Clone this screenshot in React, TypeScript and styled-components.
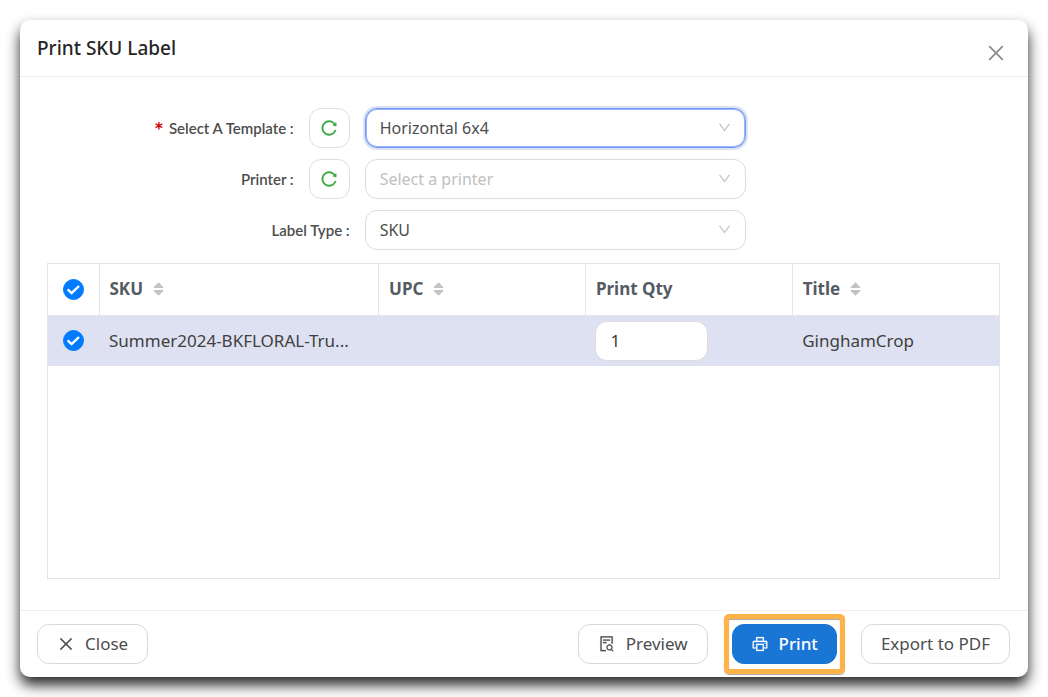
import React from "react";
import styled, { createGlobalStyle, css } from "styled-components";
import {
  AiOutlineClose,
  AiOutlineDown,
  AiOutlineFileSearch,
  AiOutlinePrinter,
  AiOutlineReload,
} from "react-icons/ai";

const uiFont = `"Noto Sans", "Open Sans", sans-serif`;
const labelFont = `Lato, "Noto Sans", sans-serif`;

const GlobalStyle = createGlobalStyle`
  *, *::before, *::after { box-sizing: border-box; }
  body {
    margin: 0;
    background: #fff;
    color: #474747;
    font-family: ${uiFont};
    font-size: 16px;
    line-height: 24px;
  }
  button, input, select { font: inherit; color: inherit; margin: 0; }
`;

const Page = styled.main`
  padding: 20px;
`;

const Dialog = styled.section`
  display: flex;
  flex-direction: column;
  background: #fff;
  border-radius: 10px;
  box-shadow: 0 8px 14px rgba(0, 0, 0, 0.85);
`;

const Header = styled.header`
  display: flex;
  align-items: center;
  justify-content: space-between;
  height: 57px;
  padding: 0 17px;
  border-bottom: 1px solid #ececec;
`;

const Title = styled.h1`
  margin: 0;
  font-size: 19px;
  font-weight: 500;
  line-height: 24px;
  color: #262626;
`;

const IconButton = styled.button`
  display: flex;
  padding: 4px;
  margin-top: 9px;
  border: 0;
  background: none;
  color: #8c8c8c;
  font-size: 22px;
  cursor: pointer;
`;

const Body = styled.div`
  display: flex;
  flex-direction: column;
  gap: 13px;
  padding: 31px 28px 31px 27px;
`;

const Form = styled.form`
  display: flex;
  flex-direction: column;
  gap: 11px;
`;

const Row = styled.div`
  display: grid;
  grid-template-columns: 5fr 6fr 4fr;
  align-items: center;
`;

const LabelCell = styled.div`
  display: flex;
  align-items: center;
  justify-content: flex-end;
  gap: 15px;
  padding-right: 15px;
`;

const Label = styled.label`
  font-family: ${labelFont};
  font-size: 15px;
  font-weight: 600;
  white-space: nowrap;
  color: #4d4d4d;
`;

const Required = styled.span`
  margin-right: 6px;
  font-family: "DejaVu Sans", sans-serif;
  font-weight: 700;
  color: #c00;
`;

const ReloadButton = styled.button`
  display: flex;
  align-items: center;
  justify-content: center;
  width: 41px;
  height: 40px;
  padding: 0;
  border: 1px solid #dedede;
  border-radius: 12px;
  background: #fff;
  color: #3aa63f;
  font-size: 18px;
  cursor: pointer;

  svg {
    stroke: currentColor;
    stroke-width: 28px;
  }
`;

const SelectBox = styled.div`
  position: relative;
  color: #c4c4c4;

  svg {
    position: absolute;
    top: 12px;
    right: 14px;
    font-size: 15px;
    pointer-events: none;
  }
`;

const Select = styled.select<{ $active?: boolean; $empty?: boolean }>`
  display: block;
  width: 100%;
  height: 40px;
  padding: 0 40px 0 14px;
  appearance: none;
  outline: none;
  border: 1px solid #dcdcdc;
  border-radius: 12px;
  background: #fff;
  color: ${(p) => (p.$empty ? "#c0c0c0" : "#4d4d4d")};
  ${(p) =>
    p.$active &&
    css`
      border-color: #7596f0;
      box-shadow: inset 0 0 0 1px #9db5f6, 0 0 0 2px #dbe3fb;
    `}
`;

const TableFrame = styled.div`
  min-height: 316px;
  border: 1px solid #e4e4e4;
`;

const Table = styled.table`
  width: 100%;
  table-layout: fixed;
  border-collapse: collapse;
  font-size: 17px;
`;

const HeadCell = styled.th`
  height: 51px;
  padding: 0 10px;
  border-bottom: 1px solid #e6e6e6;
  text-align: left;
  font-weight: 700;
  color: #545b63;

  & + & {
    border-left: 1px solid #e6e6e6;
  }
`;

const HeadContent = styled.span`
  display: flex;
  align-items: center;
  gap: 10px;
`;

const BodyRow = styled.tr`
  background: #dee1f1;
`;

const Cell = styled.td`
  height: 51px;
  padding: 0 10px;
  white-space: nowrap;
  color: #404040;
`;

const CheckBox = styled.span`
  display: grid;
  width: 21px;
  height: 21px;
  margin: 0 auto;

  input,
  svg {
    grid-area: 1 / 1;
    width: 21px;
    height: 21px;
  }

  input {
    appearance: none;
    border: 1px solid #c4c4c4;
    border-radius: 50%;
    background: #fff;
  }

  input:checked {
    border-color: #007bff;
    background: #007bff;
  }

  svg {
    pointer-events: none;
  }
`;

const QtyInput = styled.input`
  display: block;
  width: 113px;
  height: 40px;
  padding: 0 14px;
  border: 1px solid #dcdcdc;
  border-radius: 12px;
  background: #fff;
`;

const Footer = styled.footer`
  display: flex;
  align-items: center;
  justify-content: space-between;
  padding: 3px 18px 3px 17px;
  border-top: 1px solid #efefef;
`;

const Actions = styled.div`
  display: flex;
  align-items: center;
  gap: 16px;
`;

const Button = styled.button<{ $primary?: boolean }>`
  display: flex;
  align-items: center;
  gap: 10px;
  height: 40px;
  padding: 0 ${(p) => (p.$primary ? 18 : 19)}px;
  border: 1px solid ${(p) => (p.$primary ? "#1976d5" : "#d9d9d9")};
  border-radius: 12px;
  background: ${(p) => (p.$primary ? "#1976d5" : "#fff")};
  color: ${(p) => (p.$primary ? "#fff" : "#4d4d4d")};
  font-size: 17px;
  font-weight: ${(p) => (p.$primary ? 500 : 400)};
  white-space: nowrap;
  cursor: pointer;

  svg {
    font-size: 18px;
    stroke: currentColor;
    stroke-width: 12px;
  }
`;

const Highlight = styled.div`
  padding: 5px 3px;
  border: 5px solid #ffb347;
  border-radius: 5px;
  box-shadow: 0 1px 1px rgba(80, 80, 80, 0.5), inset 0 1px 1px rgba(80, 80, 80, 0.5);
`;

function SortIcon() {
  return (
    <svg width="11" height="14" viewBox="0 0 11 14" fill="#c3c3c3" aria-hidden="true">
      <path d="M5.5 0.3 10 4.7Q10.8 6 9.8 6H1.2Q0.2 6 1 4.7Z" />
      <path d="M5.5 13.7 10 9.3Q10.8 8 9.8 8H1.2Q0.2 8 1 9.3Z" />
    </svg>
  );
}

function RoundCheck({ label }: { label: string }) {
  return (
    <CheckBox>
      <input type="checkbox" defaultChecked aria-label={label} />
      <svg viewBox="0 0 21 21" fill="none" stroke="#fff" strokeWidth="2.4" aria-hidden="true">
        <path d="M4.6 10.4 8.6 14.2 16 7" />
      </svg>
    </CheckBox>
  );
}

interface FieldProps {
  id: string;
  label: string;
  value: string;
  required?: boolean;
  reload?: boolean;
  active?: boolean;
  empty?: boolean;
}

function Field({ id, label, value, required, reload, active, empty }: FieldProps) {
  return (
    <Row>
      <LabelCell>
        <Label htmlFor={id}>
          {required && <Required>*</Required>}
          {label} :
        </Label>
        {reload && (
          <ReloadButton type="button" aria-label={`Reload ${label}`}>
            <AiOutlineReload />
          </ReloadButton>
        )}
      </LabelCell>
      <SelectBox>
        <Select id={id} $active={active} $empty={empty}>
          <option>{value}</option>
        </Select>
        <AiOutlineDown />
      </SelectBox>
    </Row>
  );
}

const columns = [
  { name: "SKU", sortable: true },
  { name: "UPC", sortable: true },
  { name: "Print Qty", sortable: false },
  { name: "Title", sortable: true },
];

export default function App() {
  return (
    <Page>
      <GlobalStyle />
      <Dialog role="dialog" aria-labelledby="dialog-title">
        <Header>
          <Title id="dialog-title">Print SKU Label</Title>
          <IconButton type="button" aria-label="Close dialog">
            <AiOutlineClose />
          </IconButton>
        </Header>
        <Body>
          <Form>
            <Field id="template" label="Select A Template" value="Horizontal 6x4" required reload active />
            <Field id="printer" label="Printer" value="Select a printer" reload empty />
            <Field id="label-type" label="Label Type" value="SKU" />
          </Form>
          <TableFrame>
            <Table>
              <colgroup>
                <col style={{ width: 51 }} />
                <col style={{ width: "29.4%" }} />
                <col />
                <col />
                <col />
              </colgroup>
              <thead>
                <tr>
                  <HeadCell scope="col">
                    <RoundCheck label="Select all rows" />
                  </HeadCell>
                  {columns.map((c) => (
                    <HeadCell key={c.name} scope="col">
                      <HeadContent>
                        {c.name}
                        {c.sortable && <SortIcon />}
                      </HeadContent>
                    </HeadCell>
                  ))}
                </tr>
              </thead>
              <tbody>
                <BodyRow>
                  <Cell>
                    <RoundCheck label="Select row" />
                  </Cell>
                  <Cell>Summer2024-BKFLORAL-Tru...</Cell>
                  <Cell />
                  <Cell>
                    <QtyInput defaultValue="1" aria-label="Print quantity" />
                  </Cell>
                  <Cell>GinghamCrop</Cell>
                </BodyRow>
              </tbody>
            </Table>
          </TableFrame>
        </Body>
        <Footer>
          <Button type="button">
            <AiOutlineClose />
            Close
          </Button>
          <Actions>
            <Button type="button">
              <AiOutlineFileSearch />
              Preview
            </Button>
            <Highlight>
              <Button type="button" $primary>
                <AiOutlinePrinter />
                Print
              </Button>
            </Highlight>
            <Button type="button">Export to PDF</Button>
          </Actions>
        </Footer>
      </Dialog>
    </Page>
  );
}
